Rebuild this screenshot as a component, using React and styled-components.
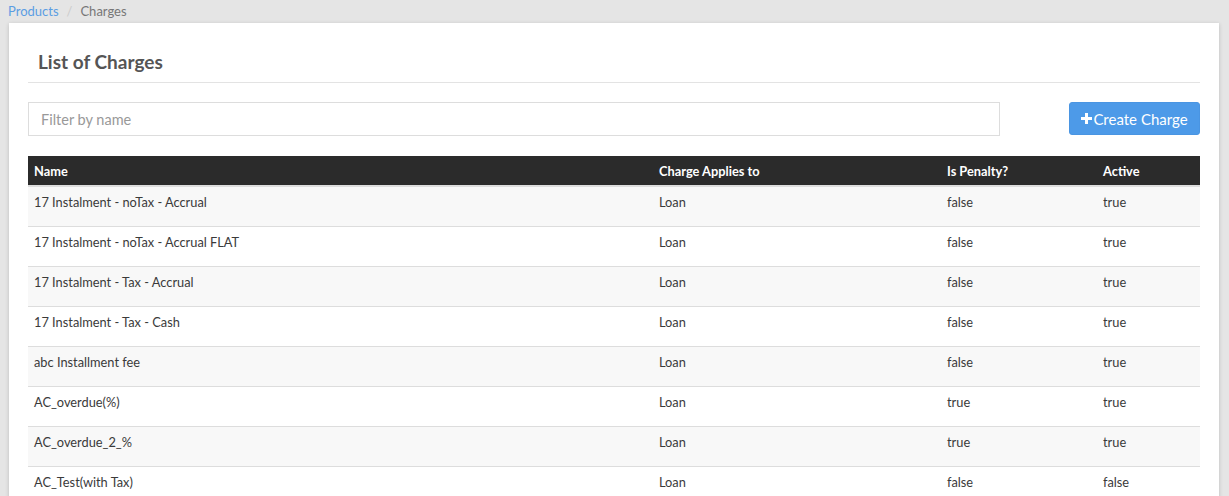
import React from 'react';
import styled, { createGlobalStyle } from 'styled-components';

const GlobalStyle = createGlobalStyle`
	html, body {
		margin: 0;
		padding: 0;
		background-color: #e5e5e5;
		font-family: Lato, 'Open Sans', sans-serif;
		color: #333;
	}
`;

const Page = styled.div`
	padding: 3px 10px 0 9px;
	box-sizing: border-box;
	min-height: 100vh;
`;

const Breadcrumb = styled.div`
	display: flex;
	align-items: center;
	font-size: 13px;
	height: 16px;
	margin-left: -1px;
	color: #777;
`;

const Crumb = styled.span`
	color: ${(p) => (p.active ? '#777' : '#5b9de3')};
`;

const Divider = styled.span`
	color: #ccc;
	padding: 0 8px;
`;

const Card = styled.div`
	margin-top: 4px;
	background-color: #fff;
	box-shadow: 0 1px 4px rgba(0, 0, 0, 0.18);
	padding: 21px 19px 0 19px;
	box-sizing: border-box;
	height: 480px;
	overflow: hidden;
`;

const TitleBar = styled.div`
	border-bottom: 1px solid #e3e3e3;
	padding: 6px 10px 8px 10px;
`;

const Title = styled.h3`
	margin: 0;
	font-size: 19px;
	font-weight: 700;
	color: #555;
	line-height: 24px;
`;

const Toolbar = styled.div`
	display: flex;
	justify-content: space-between;
	align-items: flex-start;
	margin-top: 19px;
`;

const Filter = styled.input`
	width: 972px;
	height: 34px;
	box-sizing: border-box;
	border: 1px solid #ddd;
	padding: 0 12px;
	font-family: inherit;
	font-size: 14.5px;
	color: #555;
	outline: none;
	&::placeholder {
		color: #999;
	}
`;

const CreateButton = styled.button`
	width: 131px;
	height: 33px;
	border: 1px solid #4a95e2;
	border-radius: 3px;
	background-color: #4d9ae8;
	color: #fff;
	font-family: inherit;
	font-size: 15px;
	display: flex;
	align-items: center;
	justify-content: center;
	gap: 1px;
	padding: 0;
`;

const Table = styled.table`
	width: 100%;
	margin-top: 20px;
	border-collapse: collapse;
	table-layout: fixed;
	font-size: 12.8px;
`;

const HeadCell = styled.th`
	background-color: #2b2b2b;
	color: #fff;
	text-align: left;
	font-weight: 700;
	height: 30px;
	padding: 0 6px;
	box-sizing: border-box;
	border-bottom: 2px solid #ddd;
	width: ${(p) => p.w}px;
`;

const Row = styled.tr`
	background-color: ${(p) => (p.striped ? '#f8f8f8' : '#fff')};
	border-bottom: 1px solid #ddd;
`;

const Cell = styled.td`
	padding: 7px 6px 16px 6px;
	line-height: 16px;
	color: #3a3a3a;
	vertical-align: top;
`;

const PlusIcon = () => (
	<svg width="11" height="11" viewBox="0 0 11 11">
		<path d="M4 0h3v4h4v3H7v4H4V7H0V4h4z" fill="#fff" />
	</svg>
);

const columns = [
	{ label: 'Name', w: 625 },
	{ label: 'Charge Applies to', w: 288 },
	{ label: 'Is Penalty?', w: 156 },
	{ label: 'Active', w: 103 },
];

const charges = [
	['17 Instalment - noTax - Accrual', 'Loan', 'false', 'true'],
	['17 Instalment - noTax - Accrual FLAT', 'Loan', 'false', 'true'],
	['17 Instalment - Tax - Accrual', 'Loan', 'false', 'true'],
	['17 Instalment - Tax - Cash', 'Loan', 'false', 'true'],
	['abc Installment fee', 'Loan', 'false', 'true'],
	['AC_overdue(%)', 'Loan', 'true', 'true'],
	['AC_overdue_2_%', 'Loan', 'true', 'true'],
	['AC_Test(with Tax)', 'Loan', 'false', 'false'],
];

export default function App() {
	return (
		<>
			<GlobalStyle />
			<Page>
				<Breadcrumb>
					<Crumb>Products</Crumb>
					<Divider>/</Divider>
					<Crumb active>Charges</Crumb>
				</Breadcrumb>
				<Card>
					<TitleBar>
						<Title>List of Charges</Title>
					</TitleBar>
					<Toolbar>
						<Filter placeholder="Filter by name" />
						<CreateButton>
							<PlusIcon />
							Create Charge
						</CreateButton>
					</Toolbar>
					<Table>
						<thead>
							<tr>
								{columns.map((c) => (
									<HeadCell key={c.label} w={c.w}>
										{c.label}
									</HeadCell>
								))}
							</tr>
						</thead>
						<tbody>
							{charges.map((row, i) => (
								<Row key={row[0]} striped={i % 2 === 0}>
									{row.map((v, j) => (
										<Cell key={j}>{v}</Cell>
									))}
								</Row>
							))}
						</tbody>
					</Table>
				</Card>
			</Page>
		</>
	);
}
